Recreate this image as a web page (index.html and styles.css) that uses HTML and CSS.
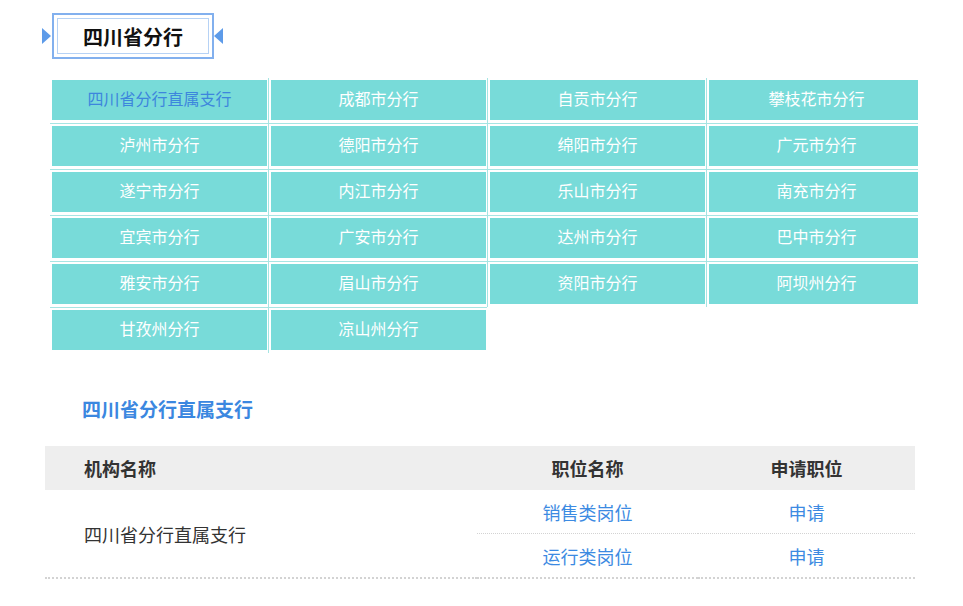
FILE: index.html
```html
<!DOCTYPE html>
<html lang="zh-CN">
<head>
    <meta charset="UTF-8">
    <meta name="viewport" content="width=device-width, initial-scale=1.0">
    <title>四川省分行</title>
    <link rel="stylesheet" href="styles.css">
</head>
<body>
    <div class="branch-title">
        <div class="branch-title-inner">四川省分行</div>
    </div>

    <div class="branch-wrap">
        <ul class="branch-list">
            <li><a href="#" class="active">四川省分行直属支行</a></li>
            <li><a href="#">成都市分行</a></li>
            <li><a href="#">自贡市分行</a></li>
            <li><a href="#">攀枝花市分行</a></li>
            <li><a href="#">泸州市分行</a></li>
            <li><a href="#">德阳市分行</a></li>
            <li><a href="#">绵阳市分行</a></li>
            <li><a href="#">广元市分行</a></li>
            <li><a href="#">遂宁市分行</a></li>
            <li><a href="#">内江市分行</a></li>
            <li><a href="#">乐山市分行</a></li>
            <li><a href="#">南充市分行</a></li>
            <li><a href="#">宜宾市分行</a></li>
            <li><a href="#">广安市分行</a></li>
            <li><a href="#">达州市分行</a></li>
            <li><a href="#">巴中市分行</a></li>
            <li><a href="#">雅安市分行</a></li>
            <li><a href="#">眉山市分行</a></li>
            <li><a href="#">资阳市分行</a></li>
            <li><a href="#">阿坝州分行</a></li>
            <li><a href="#">甘孜州分行</a></li>
            <li><a href="#">凉山州分行</a></li>
        </ul>
    </div>

    <h2 class="sub-title">四川省分行直属支行</h2>

    <table class="job-table">
        <colgroup>
            <col class="col-org">
            <col class="col-job">
            <col class="col-apply">
        </colgroup>
        <thead>
            <tr>
                <th class="org">机构名称</th>
                <th>职位名称</th>
                <th>申请职位</th>
            </tr>
        </thead>
        <tbody>
            <tr class="row-first">
                <td class="org" rowspan="2">四川省分行直属支行</td>
                <td><a href="#">销售类岗位</a></td>
                <td><a href="#">申请</a></td>
            </tr>
            <tr class="row-last">
                <td><a href="#">运行类岗位</a></td>
                <td><a href="#">申请</a></td>
            </tr>
        </tbody>
    </table>
</body>
</html>
```

FILE: styles.css
```css
body {
    margin: 0;
    background: #fff;
    font-family: "Noto Sans CJK SC", "Noto Sans", sans-serif;
}

/* title frame */
.branch-title {
    position: relative;
    box-sizing: border-box;
    width: 162px;
    height: 46px;
    margin: 13px 0 0 52px;
    padding: 3px;
    border: 2px solid #82b0ee;
}
.branch-title-inner {
    display: flex;
    align-items: center;
    justify-content: center;
    box-sizing: border-box;
    height: 100%;
    border: 1px solid #b6d2f5;
    font-size: 20px;
    font-weight: bold;
    color: #111;
}
.branch-title::before,
.branch-title::after {
    content: "";
    position: absolute;
    top: 13px;
    border-top: 8px solid transparent;
    border-bottom: 8px solid transparent;
}
.branch-title::before {
    left: -12px;
    border-left: 9px solid #5d9be9;
}
.branch-title::after {
    right: -11px;
    border-right: 9px solid #5d9be9;
}

/* branch grid */
.branch-wrap {
    width: 868px;
    margin: 19px 0 0 50px;
    overflow: hidden;
}
.branch-list {
    list-style: none;
    margin: -1px 0 0 -1px;
    padding: 0;
    display: grid;
    grid-template-columns: repeat(4, 219px);
}
.branch-list li {
    border-left: 1px solid #a6e5e3;
    border-top: 1px solid #a6e5e3;
    padding: 2px 1px 3px 2px;
}
.branch-list a {
    display: block;
    height: 40px;
    line-height: 37px;
    background: #78dbd9;
    color: #fff;
    text-align: center;
    font-size: 16px;
    text-decoration: none;
}
.branch-list a.active {
    color: #3d86dd;
}

.sub-title {
    margin: 44px 0 0 82px;
    font-size: 19px;
    line-height: 24px;
    font-weight: bold;
    color: #3b87e0;
}

/* job table */
.job-table {
    width: 870px;
    margin: 25px 0 0 45px;
    border-collapse: collapse;
    font-size: 18px;
    color: #333;
}
.col-org { width: 432px; }
.col-job { width: 221px; }
.col-apply { width: 217px; }
.job-table th {
    height: 44px;
    padding: 0;
    background: #eee;
    font-weight: bold;
    color: #333;
}
.job-table td {
    height: 43px;
    padding: 0;
    text-align: center;
}
.job-table .org {
    text-align: left;
    padding-left: 39px;
}
.job-table td.org {
    border-bottom: 2px dotted #d3d3d3;
}
.row-first td {
    border-bottom: 1px dotted #d3d3d3;
}
.row-last td {
    border-bottom: 2px dotted #d3d3d3;
}
.job-table a {
    color: #3c8ae2;
    text-decoration: none;
}
```
